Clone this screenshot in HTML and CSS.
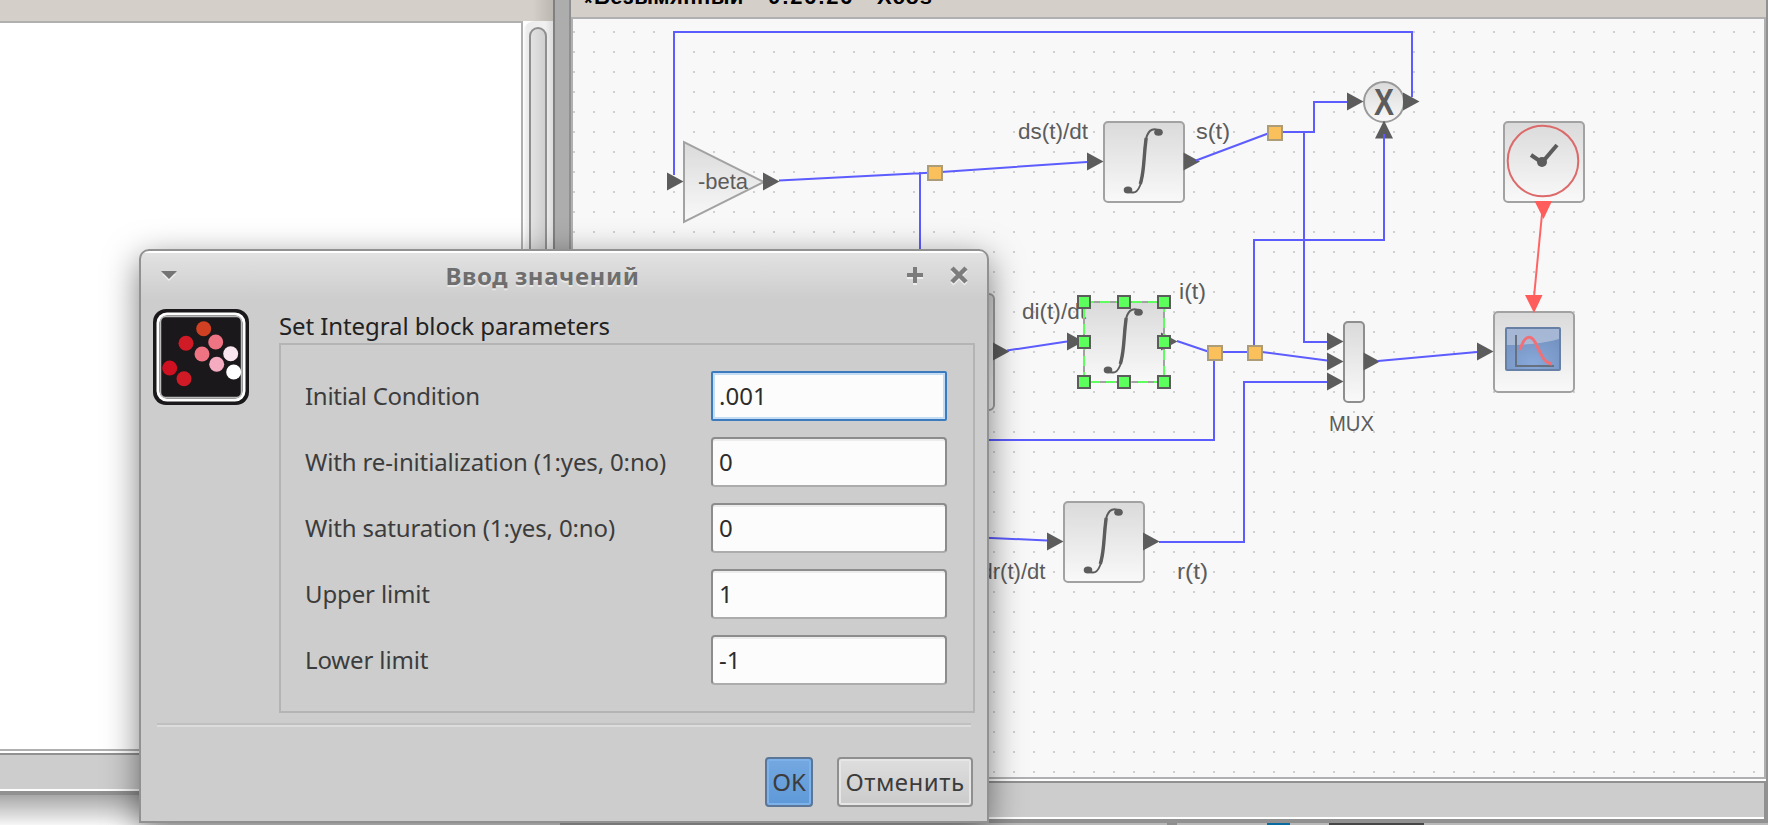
FILE: index.html
```html
<!DOCTYPE html>
<html lang="ru">
<head>
<meta charset="utf-8">
<title>Xcos</title>
<link rel="stylesheet" href="styles.css">
</head>
<body>
<main class="desktop">
  <section class="console">
    <div class="console-bar"></div>
    <div class="console-body">
      <div class="editor"></div>
      <div class="scroll"><div class="thumb"></div></div>
    </div>
    <div class="status"></div>
  </section>
  <section class="xcos">
    <div class="frame-left"></div>
    <div class="xcos-main">
      <div class="xcos-bar"><span class="t-mark">*</span><span class="t-name">Безымянный</span><span class="t-time">0:26:26</span><span class="t-app">Xcos</span></div>
      <div class="canvas">
        <svg class="diagram" viewBox="573 19 1191 758" width="1191" height="758">
          <defs>
            <pattern id="grid" x="573" y="31" width="20" height="20" patternUnits="userSpaceOnUse"><rect width="2" height="2" fill="#d0d0d0"/></pattern>
            <linearGradient id="face" x1="0" y1="0" x2="0" y2="1"><stop offset="0" stop-color="#dadada"/><stop offset="1" stop-color="#f9f9f9"/></linearGradient>
            <radialGradient id="screen" cx=".5" cy=".85" r=".7"><stop offset="0" stop-color="#88a9da"/><stop offset="1" stop-color="#7593c2"/></radialGradient>
            <path id="arrow" d="M0-9 16.500 0 0 9z"/>
            <g id="integral">
              <rect x="1" y="1" width="80" height="80" rx="4" fill="url(#face)" stroke="#a2a2a2" stroke-width="2"/>
              <path d="M57 10C52 7 45.500 7 43 18C41.500 25 41.500 34 40.500 44C39.500 60 36.500 71.500 30 71.500C27 71.500 26 71 24 70" fill="none" stroke="#5c5c5c" stroke-width="2"/>
              <path d="M43.200 17C41.700 28 41.300 37 40.500 45C39.700 53 38.800 58 37.300 63" fill="none" stroke="#5c5c5c" stroke-width="3.400"/>
              <ellipse cx="55.500" cy="11.300" rx="4.300" ry="3.500" fill="#5c5c5c"/>
              <ellipse cx="25" cy="69" rx="4.300" ry="3.500" fill="#5c5c5c"/>
            </g>
            <rect id="split" x="1" y="1" width="14" height="14" fill="#fac05c" stroke="#ad9c78" stroke-width="2"/>
            <rect id="grip" x="-6" y="-6" width="12" height="12" fill="#5cff5c" stroke="#5c5c5c" stroke-width="2"/>
          </defs>
          <rect x="573" y="19" width="1191" height="758" fill="url(#grid)"/>

          <rect x="914" y="294" width="80" height="116" rx="5" fill="url(#face)" stroke="#a2a2a2" stroke-width="2"/>
          <path d="M684 142v80l80-40z" fill="url(#face)" stroke="#a2a2a2" stroke-width="2"/>
          <circle cx="1384" cy="102" r="20" fill="url(#face)" stroke="#9a9a9a" stroke-width="2"/>
          <use href="#integral" x="1103" y="121"/>
          <use href="#integral" x="1083" y="301"/>
          <use href="#integral" x="1063" y="501"/>
          <rect x="1344" y="322" width="20" height="80" rx="4" fill="url(#face)" stroke="#8e8e8e" stroke-width="2"/>
          <rect x="1504" y="122" width="80" height="80" rx="4" fill="url(#face)" stroke="#a2a2a2" stroke-width="2"/>
          <circle cx="1543" cy="161" r="35.300" fill="none" stroke="#dc6a6a" stroke-width="2"/>
          <path d="M1531 155l11 7.500 15-17.500" fill="none" stroke="#5c5c5c" stroke-width="4"/>
          <circle cx="1542" cy="162" r="5" fill="#5c5c5c"/>
          <rect x="1494" y="312" width="80" height="80" rx="4" fill="url(#face)" stroke="#a2a2a2" stroke-width="2"/>
          <rect x="1506" y="328" width="54" height="42" rx="1" fill="url(#screen)" stroke="#6780a6" stroke-width="2"/>
          <path d="M1507 329h52v10q-20 6-52 6z" fill="#b1c0d8" opacity=".8"/>
          <path d="M1516 335v31h38" fill="none" stroke="#66707e" stroke-width="2"/>
          <path d="M1520 350C1524 336 1530 334 1535 342C1541 353 1543 363 1552 364" fill="none" stroke="#f07078" stroke-width="3"/>

          <g fill="#5c5c5c">
            <use href="#arrow" x="667" y="181.500"/><use href="#arrow" x="763" y="181.500"/>
            <use href="#arrow" x="1087" y="161.500"/><use href="#arrow" x="1183.500" y="161.500"/>
            <use href="#arrow" x="1347" y="101.500"/><use href="#arrow" x="1403" y="101.500"/>
            <use href="#arrow" x="993" y="351.500"/><use href="#arrow" x="1067" y="341.500"/>
            <use href="#arrow" x="1161" y="341.500"/><use href="#arrow" x="1327" y="341.500"/>
            <use href="#arrow" x="1327" y="361.500"/><use href="#arrow" x="1327" y="381.500"/>
            <use href="#arrow" x="1363.500" y="361.500"/><use href="#arrow" x="1477" y="351.500"/>
            <use href="#arrow" x="1047" y="541.500"/><use href="#arrow" x="1143" y="541.500"/>
            <path d="M1375 138.500h18l-9-18z"/>
          </g>
          <g fill="none" stroke="#5c5cff" stroke-width="2">
            <path d="M674 175V32H1412V97M779 180.500 934 172.500 1087 162M920 172V260M1196 160.500 1268 133.500M1282 132H1314V102H1347M1304 133V342H1327M1384 134V240H1254V346M1177 341 1208 351.500M1222 352H1248M1262 352 1327 360.500M1214 360V440H980M1007 350.500 1067 341.500M1378 361 1477 352M980 537.500 1047 540.500M1159 542H1244V382H1327"/>
          </g>
          <path d="M1542 214 1534 297" stroke="#ff6464" stroke-width="2"/>
          <path d="M1534.500 201h17.500l-8.500 18zM1525 295h17.500l-8.500 18z" fill="#ff5c5c"/>
          <use href="#split" x="927" y="165"/><use href="#split" x="1267" y="125"/>
          <use href="#split" x="1207" y="345"/><use href="#split" x="1247" y="345"/>

          <g class="labels">
            <text x="698" y="189" textLength="50" lengthAdjust="spacingAndGlyphs">-beta</text>
            <text x="1018" y="138.500" textLength="70" lengthAdjust="spacingAndGlyphs">ds(t)/dt</text>
            <text x="1196" y="138.500" textLength="34" lengthAdjust="spacingAndGlyphs">s(t)</text>
            <text x="1022" y="318.500" textLength="64" lengthAdjust="spacingAndGlyphs">di(t)/dt</text>
            <text x="1179" y="298.500" textLength="27" lengthAdjust="spacingAndGlyphs">i(t)</text>
            <text x="980.500" y="578.500" textLength="65" lengthAdjust="spacingAndGlyphs">dr(t)/dt</text>
            <text x="1177" y="578.500" textLength="31" lengthAdjust="spacingAndGlyphs">r(t)</text>
            <text x="1329" y="430.500" textLength="45" lengthAdjust="spacingAndGlyphs">MUX</text>
            <text class="times" x="1374" y="115" textLength="20" lengthAdjust="spacingAndGlyphs">X</text>
          </g>
          <rect x="1084" y="302" width="80" height="80" fill="none" stroke="#a2a2a2" stroke-width="2"/>
          <rect x="1084" y="302" width="80" height="80" fill="none" stroke="#5cff5c" stroke-width="2" stroke-dasharray="10 6"/>
          <use href="#grip" x="1084" y="302"/><use href="#grip" x="1124" y="302"/><use href="#grip" x="1164" y="302"/>
          <use href="#grip" x="1084" y="342"/><use href="#grip" x="1164" y="342"/>
          <use href="#grip" x="1084" y="382"/><use href="#grip" x="1124" y="382"/><use href="#grip" x="1164" y="382"/>
        </svg>
      </div>
      <div class="status"></div>
    </div>
  </section>
  <div class="dock"><i class="dock-a"></i><i class="dock-b"></i><i class="dock-c"></i></div>

  <section class="dialog">
    <header class="dialog-bar">
      <svg class="menu" viewBox="0 0 18 12" width="18" height="12"><path d="M2 4h14l-7 7z" fill="#eee"/><path d="M1 1h16l-8 8z" fill="#747474"/></svg>
      <h1>Ввод значений</h1>
      <svg class="btn-max" viewBox="0 0 16 18" width="16" height="18"><path d="M8 2v16M0 10h16" stroke="#eee" stroke-width="4"/><path d="M8 0v16M0 8h16" stroke="#7c7c7c" stroke-width="4"/></svg>
      <svg class="btn-close" viewBox="0 0 18 20" width="18" height="20"><path d="M2 4l14 14M16 4 2 18" stroke="#eee" stroke-width="4"/><path d="M2 2l14 14M16 2 2 16" stroke="#7c7c7c" stroke-width="4.500"/></svg>
    </header>
    <div class="dialog-body">
      <svg class="logo" viewBox="153 309 96 96" width="96" height="96">
        <rect x="153" y="309" width="96" height="96" rx="13" fill="#1a181b"/>
        <rect x="158" y="314" width="86" height="86" rx="9" fill="none" stroke="#fff" stroke-width="3"/>
        <rect x="160.500" y="316.500" width="81" height="81" rx="5" fill="none" stroke="#bbb" stroke-width="1.500"/>
        <circle cx="203.700" cy="328.700" r="7.500" fill="#d04124"/><circle cx="186" cy="343.300" r="7.500" fill="#d01a25"/>
        <circle cx="215.700" cy="342" r="7.500" fill="#ee7383"/><circle cx="202" cy="354" r="7.500" fill="#ee7383"/>
        <circle cx="230.700" cy="353.700" r="7.500" fill="#f9e6ef"/><circle cx="216.700" cy="364.300" r="7.500" fill="#f5abc0"/>
        <circle cx="233.700" cy="372" r="7.500" fill="#fff"/><circle cx="169.700" cy="368" r="7.500" fill="#ce1021"/>
        <circle cx="184" cy="378.700" r="7.500" fill="#d01a25"/>
      </svg>
      <div class="params">
        <h2>Set Integral block parameters</h2>
        <div class="fields">
          <label class="wide">Initial Condition</label><div class="input focus">.001</div>
          <label>With re-initialization (1:yes, 0:no)</label><div class="input">0</div>
          <label>With saturation (1:yes, 0:no)</label><div class="input">0</div>
          <label>Upper limit</label><div class="input">1</div>
          <label>Lower limit</label><div class="input">-1</div>
        </div>
      </div>
    </div>
    <div class="rule"></div>
    <footer class="actions"><div class="button primary">OK</div><div class="button cancel">Отменить</div></footer>
  </section>
</main>
</body>
</html>
```
FILE: styles.css
```css
* { box-sizing: border-box; }
body { margin: 0; background: #fff; font-family: "Noto Sans", sans-serif; font-size: 24px; }
h1, h2 { margin: 0; }
svg { display: block; }

.desktop {
  position: relative;
  width: 1768px;
  height: 825px;
  overflow: hidden;
  display: grid;
  grid-template: 823px 2px / 553px 1215px;
  background: linear-gradient(#a8a8a8 795px, #f6f6f6 825px);
}

.status {
  height: 42px;
  border-top: 2px solid #919191;
  border-bottom: 4px solid #919191;
  background: linear-gradient(#cdcdcd 34px, #fff 34px);
}

.console { display: flex; flex-direction: column; height: 795px; background: #fff; }
.console-bar { height: 21px; background: linear-gradient(90deg, #d4cfc8 533px, #bbb7b1 553px); }
.console-body { flex: 1; display: flex; margin-bottom: 2px; }
.console .status { flex: none; }
.editor { width: 523px; background: #fff; border: 2px solid #b0b0b0; border-left: 0; }
.scroll { flex: 1; padding: 6px; background: linear-gradient(90deg, #fff, #ececec 4px, #f0f0f0 22px, #dcdcdc); border-radius: 12px 0 0 0; }
.thumb { width: 18px; height: 100%; border: 2px solid #8f8f8f; border-radius: 9px; background: linear-gradient(90deg, #e2e2e2, #d0d0d0); }

.xcos { display: flex; }
.frame-left { width: 18px; background: #adadad; border-left: 2px solid #808080; border-right: 2px solid #8f8f8f; }
.xcos-main { flex: 1; display: flex; flex-direction: column; border-right: 2px solid #919191; background: #fff; }
.xcos-bar {
  height: 17px;
  display: flex;
  overflow: hidden;
  background: #d4cfc8;
  padding-left: 13px;
  font: bold 22px/22px "Liberation Sans", sans-serif;
}
.xcos-bar span { margin-top: -14px; white-space: nowrap; }
.xcos-bar .t-mark { width: 10px; margin-top: -8px; }
.t-name { width: 174px; letter-spacing: 0.4px; }
.t-time { width: 109px; letter-spacing: 1.4px; }
.t-app { letter-spacing: 0.8px; }
.canvas { border: 2px solid #b0b0b2; background: #f8f8f8; margin-bottom: 2px; }
.xcos-main .status { border-right: 2px solid #919191; }

.labels { font-family: "Liberation Sans", sans-serif; font-size: 22px; fill: #5c5c5c; }
.times { font-size: 36px; font-weight: bold; }

.dock { grid-column: 1 / -1; display: flex; padding-left: 1167px; background: linear-gradient(90deg, transparent 560px, #b9b9b9 560px); }
.dock i { height: 2px; }
.dock-a { width: 10px; background: #8e8e8e; margin-right: 90px; }
.dock-b { width: 23px; background: #0a6ba0; margin-right: 39px; }
.dock-c { width: 95px; background: #474747; }

.dialog {
  position: absolute;
  left: 139px;
  top: 249px;
  width: 850px;
  height: 574px;
  border: 2px solid #919191;
  border-radius: 10px 10px 0 0;
  background: linear-gradient(#fff 2px, #e2e2e2 2px, #cdcdcd 48px);
  box-shadow: 0 10px 34px rgba(0, 0, 0, .5);
  color: #3c3c3c;
}
.dialog-bar { height: 52px; display: flex; padding: 0 19px; }
.dialog-bar h1 { flex: 1; font-size: 24px; line-height: 49px; letter-spacing: 0.6px; text-align: center; color: #6e6e6e; text-shadow: 0 2px 0 #e8e8e8; }
.menu { margin-top: 19px; }
.btn-max { margin: 16px 27px 0 0; }
.btn-close { margin-top: 15px; }
.dialog-body { display: flex; gap: 30px; padding: 0 12px; }
.logo { margin-top: 6px; }
.params { flex: 1; }
.params h2 { height: 40px; padding-top: 3px; font-weight: normal; font-size: 24px; line-height: 40px; letter-spacing: -0.09px; color: #222; white-space: nowrap; }
.fields {
  display: grid;
  grid-template-columns: 1fr 236px;
  grid-auto-rows: 50px;
  row-gap: 16px;
  padding: 26px 26px 26px 24px;
  border: 2px solid #b4b4b4;
  line-height: 49px;
  white-space: nowrap;
}
.fields label { letter-spacing: -0.14px; }
.fields .wide { letter-spacing: -0.28px; }
.input {
  padding-left: 6px;
  border: 2px solid #8c8c8c;
  border-bottom-color: #acacac;
  border-radius: 4px;
  background: #fcfcfc;
  box-shadow: inset 0 2px 0 #ececec;
  line-height: 45px;
  color: #2c2c2c;
}
.focus { border-color: #3c7cbe; border-radius: 2px; box-shadow: inset 0 0 0 2px #c4ddf4; }
.rule { height: 4px; margin: 10px 16px 0; background: linear-gradient(#c0c0c0 2px, #dcdcdc 2px); }
.actions { display: flex; justify-content: flex-end; gap: 24px; padding: 30px 14px 0 0; }
.button {
  height: 50px;
  border: 2px solid #8f8f8f;
  border-radius: 4px;
  text-align: center;
  line-height: 46px;
  background: linear-gradient(#dedede, #cbcbcb);
  box-shadow: inset 0 0 0 2px #e6e6e6;
}
.primary { width: 48px; border-color: #5b7696; background: linear-gradient(#74a8e0, #5e99d8); box-shadow: inset 0 0 0 2px #7db1ea; }
.cancel { width: 136px; letter-spacing: 0.5px; }
```
